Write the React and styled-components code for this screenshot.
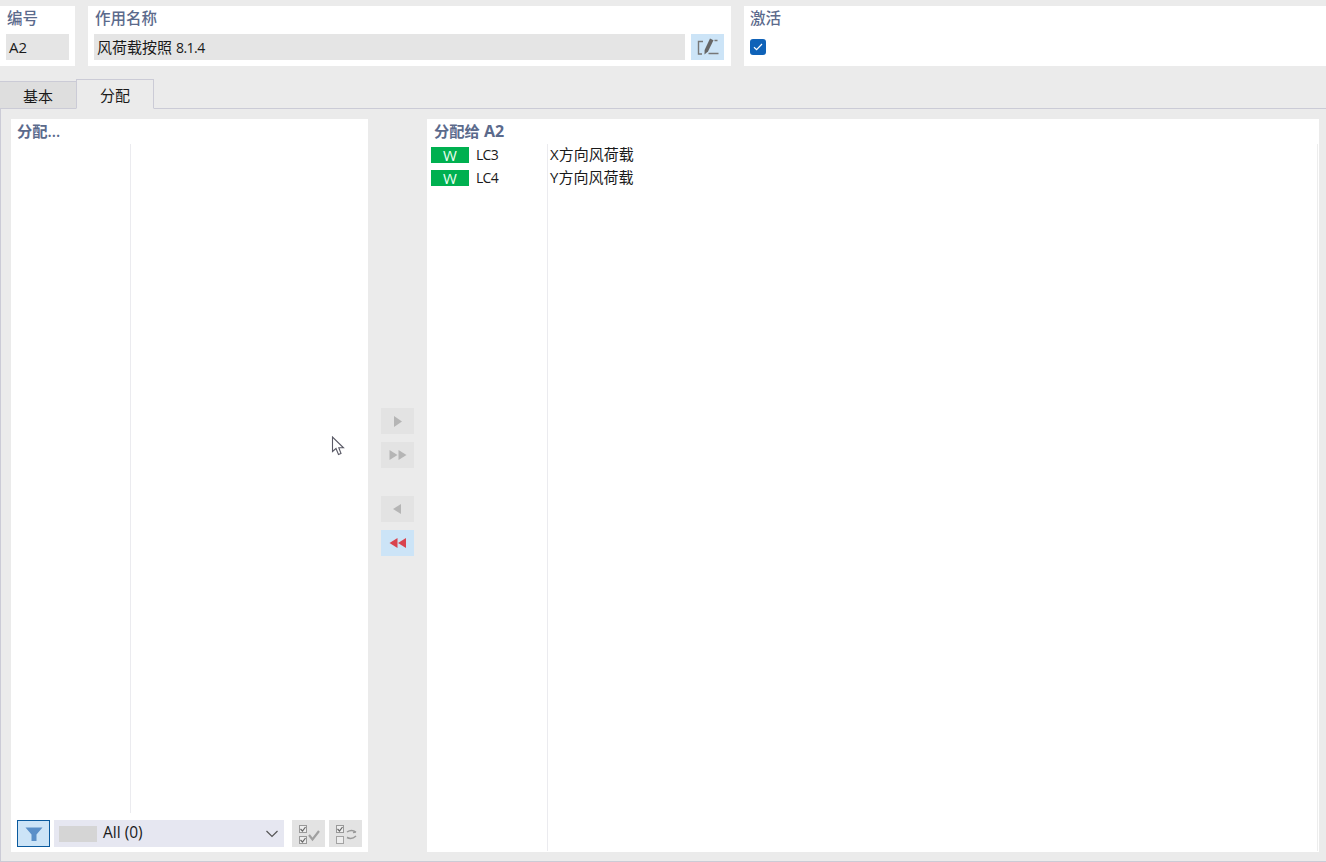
import React from "react";
import styled, { createGlobalStyle } from "styled-components";

const Global = createGlobalStyle`
  html, body { margin: 0; padding: 0; background: #ebebeb; overflow: hidden; }
  * { box-sizing: border-box; }
`;
const FONT = `"Open Sans", "Noto Sans CJK SC", sans-serif`;

const Page = styled.div`
  position: relative;
  width: 1326px;
  height: 862px;
  background: #ebebeb;
  font-family: ${FONT};
  font-size: 15px;
  color: #1a1a1a;
  overflow: hidden;
  display: flex;
  flex-direction: column;
  padding-top: 6px;
  border-bottom: 1px solid #cbcbd6;
`;
const Header = styled.div`
  display: flex;
  gap: 13px;
  height: 60px;
  flex: none;
`;
const Field = styled.div`
  background: #fff;
  width: ${p => p.$w}px;
  flex: ${p => (p.$w ? "none" : "1")};
  padding: 3px ${p => p.$pr || 7}px 6px 6px;
  display: flex;
  flex-direction: column;
`;
const Label = styled.div`
  height: 19px;
  line-height: 19px;
  font-size: 15.5px;
  font-weight: 500;
  color: #5b6a8c;
  padding-left: ${p => (p.$flush ? 0 : 1)}px;
  white-space: nowrap;
`;
const InputRow = styled.div`
  display: flex;
  gap: 6px;
  margin-top: 6px;
`;
const ReadOnly = styled.div`
  flex: 1;
  height: 26px;
  line-height: 26px;
  background: #e5e5e5;
  padding: 0 3px;
  white-space: nowrap;
`;
const Version = styled.span`
  font-size: 14px;
  letter-spacing: -0.5px;
`;
const EditButton = styled.div`
  width: 33px;
  height: 26px;
  background: #cce4f7;
  display: flex;
  align-items: center;
  justify-content: center;
  flex: none;
`;
const CheckRow = styled.div`
  margin-top: 11px;
`;
const CheckBox = styled.div`
  width: 16px;
  height: 16px;
  border-radius: 3px;
  background: #0f62b8;
  display: flex;
  align-items: center;
  justify-content: center;
`;
const Tabs = styled.div`
  display: flex;
  align-items: flex-end;
  height: 43px;
  flex: none;
  border-bottom: 1px solid #cbcbd6;
`;
const Tab = styled.div`
  height: ${p => (p.$active ? 30 : 28)}px;
  width: ${p => p.$w}px;
  margin-bottom: -1px;
  background: ${p => (p.$active ? "#ebebeb" : "#dedede")};
  border: 1px solid #cbcbd6;
  border-bottom: ${p => (p.$active ? "1px solid #ebebeb" : "1px solid #cbcbd6")};
  border-left-width: ${p => (p.$active ? 1 : 0)}px;
  border-right-width: ${p => (p.$active ? 1 : 0)}px;
  display: flex;
  align-items: center;
  justify-content: center;
  font-size: 15px;
`;
const Body = styled.div`
  flex: 1;
  min-height: 0;
  display: flex;
  padding: 10px 7px 9px 10px;
  border-left: 1px solid #cbcbd6;
`;
const Panel = styled.div`
  background: #fff;
  display: flex;
  flex-direction: column;
  width: ${p => (p.$w ? p.$w + "px" : "auto")};
  flex: ${p => (p.$w ? "none" : "1")};
  min-width: 0;
`;
const PanelTitle = styled.div`
  height: 25px;
  line-height: 25px;
  padding-left: ${p => p.$indent}px;
  font-size: 15.3px;
  font-weight: 600;
  color: #5b6a8c;
  flex: none;
  white-space: nowrap;
`;
const TitleCode = styled.span`
  font-size: 16px;
  font-weight: 700;
`;
const TreeArea = styled.div`
  flex: 1;
  min-height: 0;
  margin-left: ${p => p.$col}px;
  border-left: 1px solid #ebebef;
`;
const FootBar = styled.div`
  flex: none;
  height: 39px;
  padding: 7px 6px 5px;
  display: flex;
  gap: 4px;
`;
const FilterBtn = styled.div`
  width: 33px;
  height: 27px;
  background: #cce4f7;
  border: 1px solid #0a5a9e;
  display: flex;
  align-items: center;
  justify-content: center;
  flex: none;
`;
const Select = styled.div`
  width: 230px;
  height: 27px;
  background: #e6e7f1;
  display: flex;
  align-items: center;
  padding: 0 5px;
  flex: none;
`;
const Swatch = styled.div`
  width: 38px;
  height: 16px;
  background: #d5d5d5;
  margin-right: 6px;
  flex: none;
`;
const SelectText = styled.div`
  flex: 1;
  font-size: 15.5px;
  line-height: 23px;
  padding-bottom: 2px;
  white-space: nowrap;
`;
const FootBtn = styled.div`
  width: 33px;
  height: 27px;
  background: #e3e3e3;
  display: flex;
  align-items: center;
  justify-content: center;
  flex: none;
  margin-left: ${p => p.$ml || 0}px;
`;
const Middle = styled.div`
  width: 59px;
  flex: none;
  display: flex;
  flex-direction: column;
  align-items: center;
  padding-top: 289px;
`;
const MoveBtn = styled.div`
  width: 33px;
  height: 26px;
  background: ${p => (p.$on ? "#cce4f7" : "#e3e3e3")};
  margin-top: ${p => p.$mt || 0}px;
  display: flex;
  align-items: center;
  justify-content: center;
  flex: none;
`;
const ListArea = styled.div`
  flex: 1;
  min-height: 0;
  display: flex;
  flex-direction: column;
  margin: 0 1px 1px 0;
  border-right: 1px solid #ededed;
`;
const Row = styled.div`
  height: 23px;
  display: grid;
  grid-template-columns: 120px 1fr;
  align-items: center;
  flex: none;
`;
const KeyCell = styled.div`
  display: flex;
  align-items: center;
  padding: 0 0 2px 4px;
  height: 23px;
`;
const Badge = styled.div`
  width: 38px;
  height: 16px;
  background: #00b050;
  color: #e8fff2;
  display: flex;
  align-items: center;
  justify-content: center;
  font-size: 15px;
  line-height: 16px;
`;
const CaseId = styled.div`
  margin-left: 7px;
  font-size: 14px;
  letter-spacing: -0.7px;
`;
const RowText = styled.div`
  padding-left: 2px;
  border-left: 1px solid #ebebef;
  height: 23px;
  line-height: 21px;
  white-space: nowrap;
`;
const ColumnFill = styled.div`
  flex: 1;
  margin-left: 120px;
  border-left: 1px solid #ebebef;
`;
const Cursor = styled.svg`
  position: absolute;
  left: 331px;
  top: 436px;
`;

const Tri = ({ dir = 1, x = 0, w = 8, h = 10, c = "#b5b5b5" }) => (
  <polygon points={dir > 0 ? `${x},0 ${x + w},${h / 2} ${x},${h}` : `${x + w},0 ${x},${h / 2} ${x + w},${h}`} fill={c} />
);

const Box = ({ x, y, on }) => (
  <g>
    <rect x={x + 0.5} y={y + 0.5} width="7" height="7" fill="#eeeeee" stroke="#999" />
    {on && <path d={`M${x + 1.5} ${y + 4}l2 2 3-4`} fill="none" stroke="#666" strokeWidth="1.2" />}
  </g>
);

export default function App() {
  return (
    <Page>
      <Global />
      <Header>
        <Field $w={75} $pr={6}>
          <Label>编号</Label>
          <InputRow><ReadOnly>A2</ReadOnly></InputRow>
        </Field>
        <Field $w={643}>
          <Label>作用名称</Label>
          <InputRow>
            <ReadOnly>风荷载按照 <Version>8.1.4</Version></ReadOnly>
            <EditButton>
              <svg width="24" height="20" viewBox="0 0 24 20">
                <path d="M7 4.5H2.5V17H6" fill="none" stroke="#777" strokeWidth="1.4" />
                <path d="M14 1.5L17.5 3.2 12 14.5l-3.5 3 .1-4.6z" fill="#666" />
                <path d="M18.5 3.5h3M12.5 16.5h10" stroke="#777" strokeWidth="1.4" />
              </svg>
            </EditButton>
          </InputRow>
        </Field>
        <Field>
          <Label $flush>激活</Label>
          <CheckRow>
            <CheckBox>
              <svg width="10" height="8" viewBox="0 0 10 8">
                <path d="M1 4.2l2.6 2.4L9 1" fill="none" stroke="#fff" strokeWidth="1.2" />
              </svg>
            </CheckBox>
          </CheckRow>
        </Field>
      </Header>
      <Tabs>
        <Tab $w={76}>基本</Tab>
        <Tab $w={78} $active>分配</Tab>
      </Tabs>
      <Body>
        <Panel $w={357}>
          <PanelTitle $indent={6}>分配...</PanelTitle>
          <TreeArea $col={119} />
          <FootBar>
            <FilterBtn>
              <svg width="18" height="16" viewBox="0 0 18 16">
                <path d="M0.5 1.5h17l-6 7V15h-5V8.5z" fill="#5a8fc8" />
              </svg>
            </FilterBtn>
            <Select>
              <Swatch />
              <SelectText>All (0)</SelectText>
              <svg width="14" height="8" viewBox="0 0 14 8">
                <path d="M1.5 1l5.5 5.5L12.5 1" fill="none" stroke="#555" strokeWidth="1.2" />
              </svg>
            </Select>
            <FootBtn $ml={4}>
              <svg width="26" height="22" viewBox="0 0 26 22">
                <Box x={3} y={2} on />
                <Box x={3} y={13} on />
                <path d="M13 12l3.5 4.5L23 8" fill="none" stroke="#a0a0a0" strokeWidth="2.2" />
              </svg>
            </FootBtn>
            <FootBtn>
              <svg width="26" height="22" viewBox="0 0 26 22">
                <Box x={3} y={2} on />
                <rect x="3.5" y="13.5" width="7" height="7" fill="#eeeeee" stroke="#a3a3a3" />
                <path d="M14 9c3-2 6-2 9 0M23 9l-3 .5M14 14.5c3 1.5 6 1.2 9-1.5M14 14.5l3 1" fill="none" stroke="#999" strokeWidth="1.5" />
              </svg>
            </FootBtn>
          </FootBar>
        </Panel>
        <Middle>
          <MoveBtn>
            <svg width="10" height="11" viewBox="0 0 10 11"><Tri x={1} h={11} /></svg>
          </MoveBtn>
          <MoveBtn $mt={8}>
            <svg width="18" height="10" viewBox="0 0 18 10"><Tri x={0.5} /><Tri x={9.5} /></svg>
          </MoveBtn>
          <MoveBtn $mt={28}>
            <svg width="10" height="10" viewBox="0 0 10 10"><Tri dir={-1} x={0} /></svg>
          </MoveBtn>
          <MoveBtn $mt={8} $on>
            <svg width="18" height="10" viewBox="0 0 18 10"><Tri dir={-1} x={0.5} c="#d9434e" /><Tri dir={-1} x={9} c="#d9434e" /></svg>
          </MoveBtn>
        </Middle>
        <Panel>
          <PanelTitle $indent={7}>分配给 <TitleCode>A2</TitleCode></PanelTitle>
          <ListArea>
            <Row>
              <KeyCell><Badge>W</Badge><CaseId>LC3</CaseId></KeyCell>
              <RowText>X方向风荷载</RowText>
            </Row>
            <Row>
              <KeyCell><Badge>W</Badge><CaseId>LC4</CaseId></KeyCell>
              <RowText>Y方向风荷载</RowText>
            </Row>
            <ColumnFill />
          </ListArea>
        </Panel>
      </Body>
      <Cursor width="16" height="22" viewBox="0 0 16 22">
        <path d="M1.5 1V15.5L5 12.5 7.5 18.5 10 17.5 7.8 11.8H12.5z" fill="#fff" stroke="#5a5a66" strokeWidth="1.1" />
      </Cursor>
    </Page>
  );
}
